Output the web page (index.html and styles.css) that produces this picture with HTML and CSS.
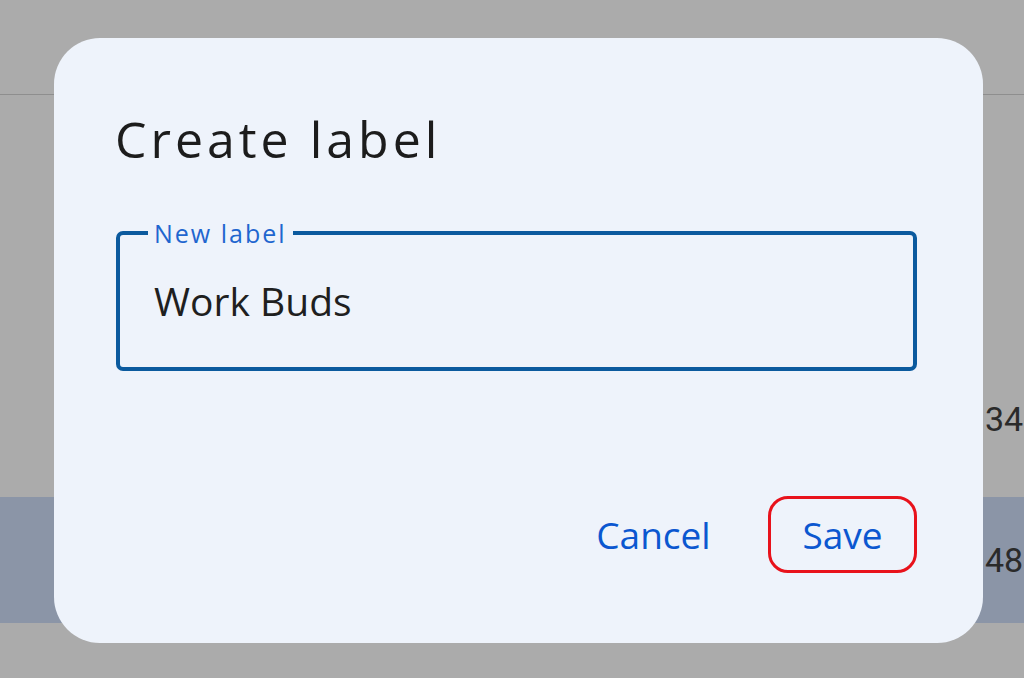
FILE: index.html
```html
<!DOCTYPE html>
<html>
<head>
<meta charset="utf-8">
<link rel="stylesheet" href="styles.css">
</head>
<body>
<div class="page">
  <div class="topbar"></div>
  <div class="row row-plain"><span class="num">34</span></div>
  <div class="row row-selected"><span class="num">48</span></div>
</div>
<div class="dialog">
  <h1 class="title">Create label</h1>
  <fieldset class="field">
    <legend class="field-label">New label</legend>
    <div class="field-value">Work Buds</div>
  </fieldset>
  <div class="actions">
    <button class="btn">Cancel</button>
    <button class="btn btn-focus">Save</button>
  </div>
</div>
</body>
</html>
```

FILE: styles.css
```css
html, body {
  margin: 0;
  padding: 0;
  width: 1024px;
  height: 678px;
  overflow: hidden;
  background: #ababab;
  font-family: "Open Sans", "Liberation Sans", sans-serif;
}
.page {
  display: flex;
  flex-direction: column;
}
.topbar {
  height: 94px;
  border-bottom: 1px solid #8e8e8e;
}
.row {
  display: flex;
  align-items: center;
  padding-left: 985px;
  white-space: nowrap;
  font-family: "Roboto", sans-serif;
  font-size: 34px;
  color: #2a2a2a;
}
.row-plain {
  height: 402px;
  padding-top: 246px;
  box-sizing: border-box;
}
.row-selected {
  height: 126px;
  background: #8b95a7;
}
.dialog {
  position: absolute;
  left: 54px;
  top: 38px;
  width: 929px;
  height: 605px;
  box-sizing: border-box;
  background: #eef3fb;
  border-radius: 46px;
  padding: 69px 66px 0 61px;
  display: flex;
  flex-direction: column;
}
.title {
  margin: 0;
  font-weight: 400;
  font-size: 50px;
  line-height: 65px;
  letter-spacing: 4px;
  color: #1c1c1c;
}
.field {
  margin: 48px 0 0 1px;
  padding: 0 0 0 34px;
  height: 151px;
  box-sizing: border-box;
  border: 4px solid #0b5a9e;
  border-radius: 7px;
}
.field-label {
  padding: 0 6px;
  margin-left: -6px;
  font-size: 25px;
  line-height: 26px;
  letter-spacing: 2px;
  color: #1f66cf;
}
.field-value {
  padding-top: 33px;
  font-size: 39px;
  line-height: 44px;
  color: #1f1f1f;
}
.actions {
  display: flex;
  justify-content: flex-end;
  gap: 40px;
  margin-top: 125px;
}
.btn {
  width: 149px;
  height: 77px;
  box-sizing: border-box;
  border: 3px solid transparent;
  border-radius: 20px;
  background: transparent;
  font-family: inherit;
  font-size: 37px;
  color: #0b57d0;
  padding: 0;
}
.btn-focus {
  border-color: #e8121b;
}
```
